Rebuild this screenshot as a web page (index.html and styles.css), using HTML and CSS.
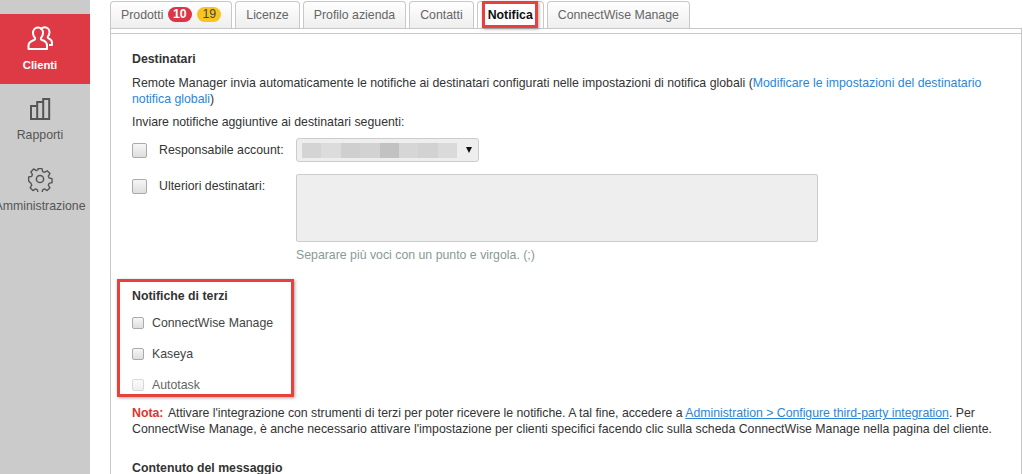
FILE: index.html
```html
<!DOCTYPE html>
<html lang="it">
<head>
<meta charset="utf-8">
<title>Notifica</title>
<link rel="stylesheet" href="styles.css">
</head>
<body>
<div class="app">
  <nav class="side">
    <a class="nav-item active">
      <svg class="nav-icon" viewBox="0 0 26 26" fill="none" stroke="currentColor" stroke-width="2"><path d="M1.500 23v-3.500c0-3 2.500-4.500 5.500-5.500 1-.4 1.500-1 1-2-1.500-1.500-2-3-2-5 0-3 2-5.500 5-5.500s5 2.500 5 5.500c0 2-.5 3.500-2 5-.5 1 0 1.600 1 2 3 1 5 2.500 5 5.500V23z" stroke-linejoin="round"/><path d="M13.500 3.500c1-1.500 2.500-2.200 4-2.200 3 0 5 2.200 5 5 0 1.800-.7 3.200-1.700 4.300-.4.800 0 1.300.8 1.700 2 .9 3.400 2 3.400 4.200V19h-3" stroke-linejoin="round"/></svg>
      <span>Clienti</span>
    </a>
    <a class="nav-item">
      <svg class="nav-icon" viewBox="0 0 26 26" fill="none" stroke="currentColor" stroke-width="2"><path d="M4 24V11h6.200v13zM10.200 24V7h6v17zM16.200 24V4h6v20z"/></svg>
      <span>Rapporti</span>
    </a>
    <a class="nav-item">
      <svg class="nav-icon" viewBox="0 0 26 26" fill="none" stroke="currentColor" stroke-width="1.500"><path stroke-linejoin="round" d="M10.800 1.500h4.400l.7 3.300 2 .9 2.900-1.800 3.100 3.100-1.800 2.900.9 2 3.200.7v4.400l-3.200.7-.9 2 1.800 2.900-3.100 3.100-2.900-1.800-2 .9-.7 3.200h-4.400l-.7-3.200-2-.9-2.900 1.800-3.100-3.100 1.800-2.900-.9-2L.5 15.200v-4.400l3.300-.7.900-2-1.800-2.900L6 1.900l2.900 1.800 2-.9z" transform="translate(1.200 1.200) scale(.91)"/><circle cx="13" cy="13" r="3.600"/></svg>
      <span class="nav-clip">Amministrazione</span>
    </a>
  </nav>
  <main class="main">
    <div class="tabs">
      <a class="tab">Prodotti <b class="badge red">10</b> <b class="badge yellow">19</b></a>
      <a class="tab">Licenze</a>
      <a class="tab">Profilo azienda</a>
      <a class="tab">Contatti</a>
      <a class="tab current">Notifica</a>
      <a class="tab">ConnectWise Manage</a>
    </div>
    <section class="panel">
      <h3 class="title">Destinatari</h3>
      <p class="lead">Remote Manager invia automaticamente le notifiche ai destinatari configurati nelle impostazioni di notifica globali (<a class="link">Modificare le impostazioni del destinatario notifica globali</a>)</p>
      <p class="send">Inviare notifiche aggiuntive ai destinatari seguenti:</p>
      <div class="field">
        <span class="check big"></span>
        <label class="field-label">Responsabile account:</label>
        <div class="select">
          <span class="blur">
            <i class="b1"></i><i class="b2"></i><i class="b3"></i><i class="b4"></i><i class="b5"></i><i class="b6"></i><i class="b7"></i><i class="b8"></i>
          </span>
          <span class="caret"></span>
        </div>
      </div>
      <div class="field extra">
        <span class="check big"></span>
        <label class="field-label">Ulteriori destinatari:</label>
        <div class="area"></div>
      </div>
      <p class="hint">Separare più voci con un punto e virgola. (;)</p>
      <h3 class="title third">Notifiche di terzi</h3>
      <div class="opt first"><span class="check"></span>ConnectWise Manage</div>
      <div class="opt"><span class="check"></span>Kaseya</div>
      <div class="opt off"><span class="check"></span>Autotask</div>
      <p class="note"><b class="note-key">Nota:</b> <span class="note-tight">Attivare l'integrazione con strumenti di terzi per poter ricevere le notifiche. A tal fine, accedere a <a class="link under">Administration &gt; Configure third-party integration</a>.</span> Per ConnectWise Manage, è anche necessario attivare l'impostazione per clienti specifici facendo clic sulla scheda ConnectWise Manage nella pagina del cliente.</p>
      <h3 class="title content">Contenuto del messaggio</h3>
    </section>
  </main>
  <div class="mark mark-tab"></div>
  <div class="mark mark-third"></div>
</div>
</body>
</html>
```
FILE: styles.css
```css
* { box-sizing: border-box; }
html, body { margin: 0; height: 100%; overflow: hidden; background: #fff; }
body { font: 12.32px/16px "Liberation Sans", Arial, sans-serif; color: #333; }
.app { position: relative; display: flex; width: 1023px; height: 474px; overflow: hidden; }

.side { width: 90px; flex: none; background: #cbcbcb; padding-top: 14px; }
.nav-item { display: flex; flex-direction: column; align-items: center; height: 70px; padding: 12px 10px 0 0; color: #555; line-height: 14px; }
.nav-item.active { background: #dd3a45; color: #fff; font-weight: bold; font-size: 11.300px; }
.nav-item.active .nav-icon { margin-bottom: 6px; }
.nav-item + .nav-item { height: 71px; padding-top: 11px; }
.nav-icon { width: 26px; height: 26px; margin-bottom: 7px; flex: none; }
.nav-clip { white-space: nowrap; }

.main { flex: 1; padding-left: 20px; min-width: 0; }
.tabs { display: flex; gap: 3px; height: 28px; padding-top: 1px; }
.tab { height: 27px; padding: 0 10px; border: 1px solid #c8c8c8; border-bottom: 0; border-radius: 4px 4px 0 0; background: linear-gradient(#fff, #eee); color: #666; line-height: 26px; white-space: nowrap; }
.tab.current { background: #fff; color: #111; font-weight: bold; height: 28px; }
.badge { display: inline-block; min-width: 24px; height: 15px; padding: 0 5px; border-radius: 8px; line-height: 15px; font-weight: normal; text-align: center; vertical-align: 1px; }
.badge.red { background: #dc3545; color: #fff; font-weight: bold; margin-left: 1px; }
.badge.yellow { background: #f7c51e; color: #444; margin-left: 2px; }

.panel { width: 912px; height: 446px; border: 1px solid #c8c8c8; border-bottom: 0; padding: 22px 21px 0; position: relative; }
.panel::before { content: ""; position: absolute; left: 0; right: 0; top: 4px; height: 1px; background: #c8c8c8; }
.title { margin: 0; font-size: inherit; line-height: 16px; font-weight: bold; color: #333; }
.lead { margin: 8px 0 0; }
.send { margin: 7px 0 0; }
.link { color: #2b86d9; }
.link.under { text-decoration: underline; }
.field { display: flex; align-items: center; margin-top: 8px; height: 24px; }
.field.extra { align-items: flex-start; margin-top: 12px; height: 68px; }
.check { display: inline-block; flex: none; width: 12px; height: 12px; border: 1px solid #aaa; border-radius: 2px; background: linear-gradient(#f6f6f6, #dedede); }
.check.big { width: 15px; height: 15px; margin-right: 12px; }
.field.extra .check.big { margin-top: 5px; }
.field-label { width: 137px; flex: none; }
.field.extra .field-label { margin-top: 4px; }
.select { display: flex; align-items: center; width: 183px; height: 24px; border: 1px solid #ccc; border-radius: 3px; background: #eee; padding: 0 5px; }
.blur { display: flex; height: 15px; width: 155px; }
.blur i { flex: 1; background: #d6d6d6; }
.blur .b1 { background: #d4d4d4; }
.blur .b2 { background: #dcdcdc; }
.blur .b3 { background: #cfcfcf; }
.blur .b4 { background: #d2d2d2; }
.blur .b5 { background: #c2c2c2; }
.blur .b6 { background: #d6d6d6; }
.blur .b7 { background: #d2d2d2; }
.blur .b8 { background: #dadada; }
.caret { margin-left: 9px; width: 0; height: 0; border-left: 3.500px solid transparent; border-right: 3.500px solid transparent; border-top: 6px solid #111; }
.area { width: 522px; height: 68px; border: 1px solid #ccc; border-radius: 2px; background: #eee; }
.hint { margin: 5px 0 0 164px; color: #8a9a96; }
.third { margin-top: 25px; }
.opt { display: flex; align-items: center; height: 31px; color: #444; }
.opt.first { margin-top: 3px; }
.opt .check { margin-right: 8px; }
.opt.off { color: #666; }
.opt.off .check { opacity: .45; }
.note { margin: 5px 0 0; }
.note-key { color: #d9362f; margin-right: 1px; }
.note-tight { letter-spacing: -.03px; }
.content { margin-top: 23px; }

.mark { position: absolute; border: 3px solid #e8403c; box-shadow: 1px 1px 3px rgba(0,0,0,.35); pointer-events: none; }
.mark-tab { left: 482px; top: 1px; width: 56px; height: 27px; }
.mark-third { left: 117px; top: 279px; width: 177px; height: 118px; }
```
